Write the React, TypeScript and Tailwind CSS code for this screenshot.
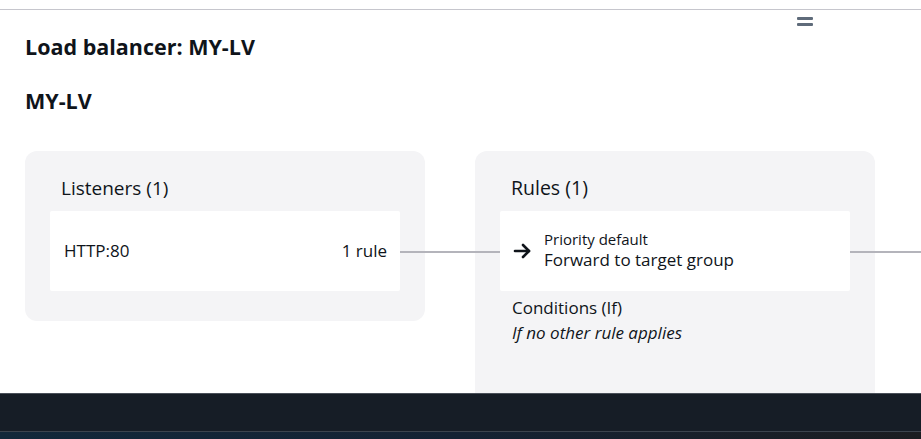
export default function App() {
  return (
    <div className="w-[921px] h-[439px] overflow-hidden bg-white font-['Open_Sans',sans-serif] text-[#0f141a]">
      <div className="h-[9px]" />
      <div className="relative h-[384px] overflow-hidden border-t border-[#c6c6cd]">
        {/* menu toggle */}
        <div className="absolute left-[797px] top-[7px] flex flex-col gap-[3px]">
          <div className="h-[3px] w-[16px] rounded-[1px] bg-[#5f6b7a]" />
          <div className="h-[3px] w-[16px] rounded-[1px] bg-[#5f6b7a]" />
        </div>

        <div className="pl-[25px] pt-[24px]">
          <h1 className="text-[21.5px] font-bold leading-[26px]">Load balancer: MY-LV</h1>
          <h2 className="mt-[28px] text-[21.5px] font-bold leading-[26px]">MY-LV</h2>

          <div className="relative mt-[37px] flex items-start gap-[50px]">
            {/* connectors */}
            <div className="absolute left-[375px] top-[100px] h-[2px] w-[100px] bg-[#b4b4bb]" />
            <div className="absolute left-[825px] top-[100px] h-[2px] w-[100px] bg-[#b4b4bb]" />

            <div className="w-[400px] h-[170px] rounded-[12px] bg-[#f4f4f6] px-[25px] pt-[25px]">
              <div className="px-[11px] text-[19px] leading-[24px]">Listeners (1)</div>
              <div className="mt-[11px] flex h-[80px] items-center justify-between rounded-[2px] bg-white pl-[14px] pr-[13px] text-[17px]">
                <span>HTTP:80</span>
                <span>1 rule</span>
              </div>
            </div>

            <div className="w-[400px] h-[260px] rounded-[12px] bg-[#f4f4f6] px-[25px] pt-[25px]">
              <div className="px-[11px] text-[19.5px] leading-[24px]">Rules (1)</div>
              <div className="mt-[11px] flex h-[80px] items-center gap-[12px] rounded-[2px] bg-white px-[13px]">
                <svg width="19" height="16" viewBox="0 0 19 16" fill="none" stroke="#0f141a" strokeWidth="2.6" strokeLinecap="round" strokeLinejoin="round">
                  <path d="M2 8h14" />
                  <path d="M10 2l6 6-6 6" />
                </svg>
                <div className="flex flex-col">
                  <span className="text-[15px] leading-[18px]">Priority default</span>
                  <span className="text-[17px] leading-[24px]">Forward to target group</span>
                </div>
              </div>
              <div className="mt-[4px] px-[12px] text-[17px] leading-[25px]">
                <div>Conditions (If)</div>
                <div className="italic">If no other rule applies</div>
              </div>
            </div>
          </div>
        </div>
      </div>
      <div className="h-[38px] border-t border-[#4a5059] bg-[#161d26]" />
      <div className="h-[8px] border-t border-[#3c444e] bg-gradient-to-r from-[#12283a] via-[#142233] to-[#1b1d21]" />
    </div>
  );
}
